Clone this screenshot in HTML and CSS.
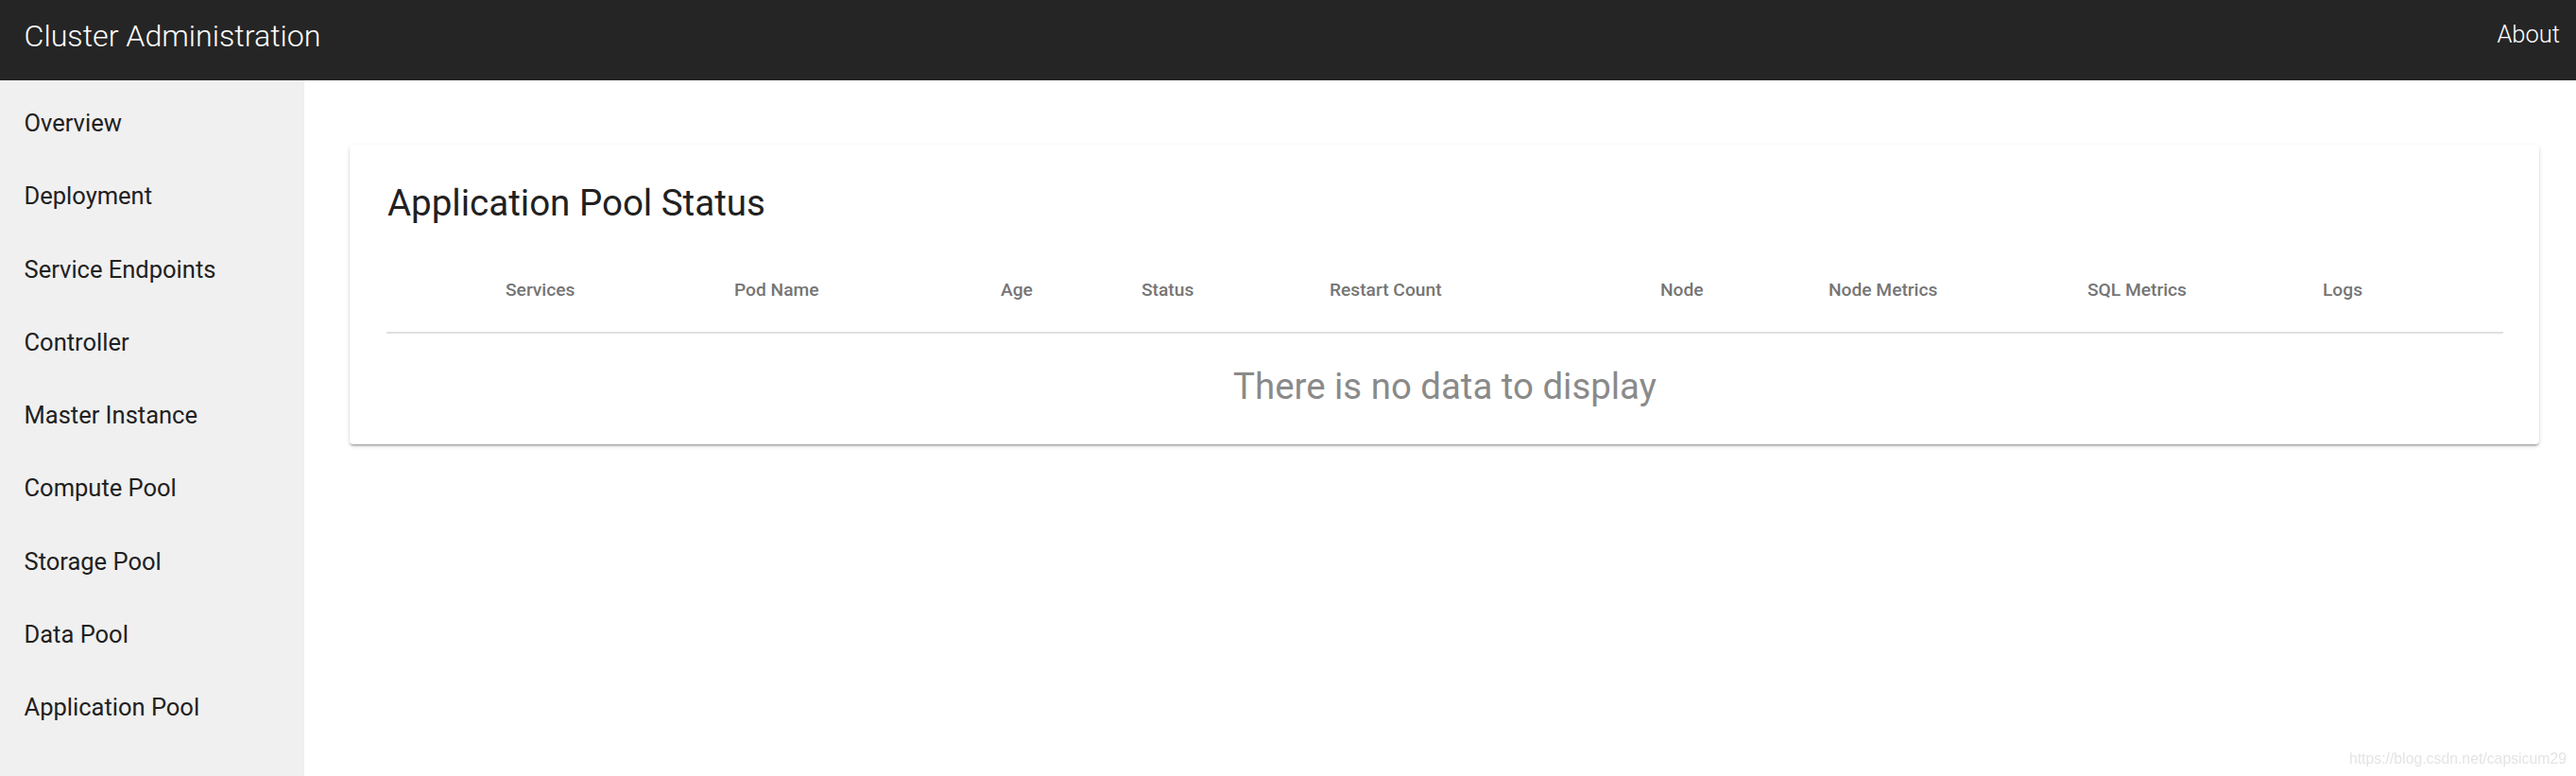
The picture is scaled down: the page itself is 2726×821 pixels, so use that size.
FILE: index.html
```html
<!DOCTYPE html>
<html lang="en">
<head>
<meta charset="utf-8">
<title>Cluster Administration</title>
<link rel="stylesheet" href="styles.css">
</head>
<body>
<header class="topbar">
  <span class="brand">Cluster Administration</span>
  <a class="about">About</a>
</header>
<div class="layout">
  <nav class="sidebar">
    <div class="nav-item">Overview</div>
    <div class="nav-item">Deployment</div>
    <div class="nav-item">Service Endpoints</div>
    <div class="nav-item">Controller</div>
    <div class="nav-item">Master Instance</div>
    <div class="nav-item">Compute Pool</div>
    <div class="nav-item">Storage Pool</div>
    <div class="nav-item">Data Pool</div>
    <div class="nav-item">Application Pool</div>
  </nav>
  <main class="content">
    <section class="card">
      <h1 class="card-title">Application Pool Status</h1>
      <div class="table">
        <div class="thead">
          <span class="th"></span>
          <span class="th">Services</span>
          <span class="th">Pod Name</span>
          <span class="th">Age</span>
          <span class="th">Status</span>
          <span class="th">Restart Count</span>
          <span class="th">Node</span>
          <span class="th">Node Metrics</span>
          <span class="th">SQL Metrics</span>
          <span class="th">Logs</span>
        </div>
        <div class="empty">There is no data to display</div>
      </div>
    </section>
  </main>
</div>
<div class="watermark">https://blog.csdn.net/capsicum29</div>
</body>
</html>
```

FILE: styles.css
```css
html, body {
  margin: 0;
  padding: 0;
  height: 100%;
}

body {
  font-family: Roboto, "Noto Sans", "Liberation Sans", sans-serif;
  background: #ffffff;
  overflow: hidden;
}

.topbar {
  height: 85px;
  box-sizing: border-box;
  background: #252525;
  color: #ffffff;
  display: flex;
  justify-content: space-between;
  align-items: flex-start;
  padding: 0 17px 0 25.5px;
}

.brand {
  font-size: 32.2px;
  font-weight: 300;
  line-height: normal;
  margin-top: 18.6px;
}

.about {
  font-size: 25.5px;
  font-weight: 300;
  line-height: normal;
  margin-top: 21.3px;
  color: #ffffff;
  cursor: pointer;
}

.layout {
  display: flex;
  height: 736px;
}

.sidebar {
  width: 322px;
  flex: none;
  background: #f0f0f0;
  padding-top: 7px;
  box-sizing: border-box;
}

.nav-item {
  height: 77.3px;
  line-height: 77.3px;
  padding-left: 25.5px;
  font-size: 25.5px;
  color: #212121;
}

.content {
  flex: 1;
  padding: 68px 39px 0 48px;
}

.card {
  background: #ffffff;
  border-radius: 4px;
  padding: 39px 38px 39px 39px;
  box-shadow: 0 3px 2px -2px rgba(0, 0, 0, 0.2),
              0 2px 2px 0 rgba(0, 0, 0, 0.14),
              0 2px 5px 0 rgba(0, 0, 0, 0.12);
}

.card-title {
  margin: 0 0 23px 1px;
  font-size: 38.5px;
  font-weight: 400;
  line-height: 46px;
  color: #212121;
}

.thead {
  display: grid;
  grid-template-columns: 126px 242px 282px 149px 199px 350px 178px 274px 249px 1fr;
  align-items: center;
  height: 90px;
  border-bottom: 2px solid #e0e0e0;
  font-size: 19.2px;
  font-weight: 500;
  color: #757575;
}

.th {
  white-space: nowrap;
}

.empty {
  padding-top: 33px;
  text-align: center;
  font-size: 38.4px;
  line-height: normal;
  color: #8a8a8a;
}

.watermark {
  position: fixed;
  right: 10px;
  bottom: 9px;
  font-family: "Liberation Sans", Arial, sans-serif;
  font-size: 15.8px;
  color: #e4e4e4;
}
```
